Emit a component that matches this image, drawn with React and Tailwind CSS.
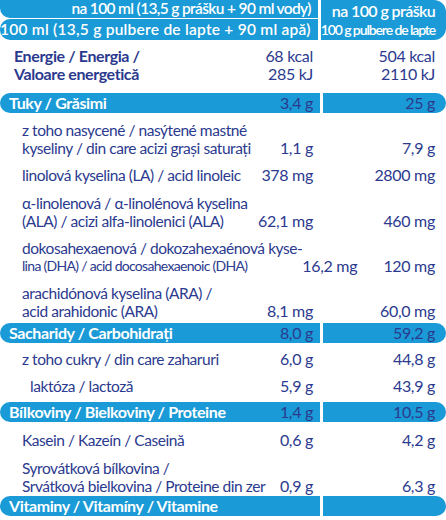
const font = { fontFamily: "Lato, 'Open Sans', sans-serif" };

function Bar({ title, v1, v2, cls = "" }) {
  return (
    <div className={`flex h-[20px] gap-[3px] ${cls}`}>
      <div className="flex w-[320px] items-center justify-between rounded-l-full bg-[#1a9ad6] pl-[9px] pr-[7px]">
        <span className="whitespace-nowrap text-[16px] font-bold tracking-[-0.4px] text-white">{title}</span>
        <span className="text-[16px] tracking-[-0.3px] text-[#2b3a8e]">{v1}</span>
      </div>
      <div className="flex flex-1 items-center justify-end rounded-r-full bg-[#1a9ad6] pr-[11px]">
        <span className="text-[16px] tracking-[-0.3px] text-[#2b3a8e]">{v2}</span>
      </div>
    </div>
  );
}

function Row({ lines, v1, v2, indent = "pl-[22px]", cls = "", small = false }) {
  return (
    <div className={`flex items-end gap-[3px] text-[#2b3a8e] ${cls}`}>
      <div className={`flex w-[320px] items-end justify-between pr-[7px] ${indent}`}>
        <div className="whitespace-nowrap leading-[18px]">
          {lines.map((l, i) => (
            <div
              key={i}
              className={
                small && i === lines.length - 1
                  ? "text-[14px] tracking-[-0.7px]"
                  : "text-[15.5px] tracking-[-0.45px]"
              }
            >
              {l}
            </div>
          ))}
        </div>
        <span className="whitespace-nowrap text-[16px] leading-[18px] tracking-[-0.3px]">{v1}</span>
      </div>
      <div className="flex flex-1 justify-end pr-[11px]">
        <span className="whitespace-nowrap text-[16px] leading-[18px] tracking-[-0.3px]">{v2}</span>
      </div>
    </div>
  );
}

export default function App() {
  return (
    <div className="h-[520px] w-[446px] overflow-hidden bg-white" style={font}>
      {/* header */}
      <div className="flex gap-[3px]">
        <div className="flex w-[320px] flex-col gap-[1px]">
          <div className="flex h-[18px] items-center justify-end rounded-bl-[10px] bg-[#1a9ad6] pr-[7px] text-[15.5px] font-semibold tracking-[-0.65px] text-white">
            <span className="whitespace-nowrap">na 100 ml (13,5 g prášku + 90 ml vody)</span>
          </div>
          <div className="flex h-[21px] items-center justify-end rounded-l-[10px] bg-[#1a9ad6] pr-[7px] text-[15.5px] font-semibold tracking-[0.25px] text-white">
            <span className="whitespace-nowrap">100 ml (13,5 g pulbere de lapte + 90 ml apă)</span>
          </div>
        </div>
        <div className="flex h-[40px] flex-1 flex-col items-end justify-center rounded-r-[12px] bg-[#1a9ad6] pr-[11px] text-white">
          <div className="whitespace-nowrap text-[16px] font-semibold leading-[18px] tracking-[-0.6px]">na 100 g prášku</div>
          <div className="whitespace-nowrap text-[14px] font-semibold leading-[19px] tracking-[-1.1px]">100 g pulbere de lapte</div>
        </div>
      </div>

      {/* energy */}
      <div className="mt-[7px] flex items-start gap-[3px] text-[#2b3a8e]">
        <div className="flex w-[320px] items-start justify-between pl-[14px] pr-[7px]">
          <div className="text-[16px] font-bold leading-[18px] tracking-[-0.4px]">
            <div>Energie / Energia /</div>
            <div>Valoare energetică</div>
          </div>
          <div className="text-right text-[16px] leading-[18px] tracking-[-0.3px]">
            <div>68 kcal</div>
            <div>285 kJ</div>
          </div>
        </div>
        <div className="flex-1 pr-[11px] text-right text-[16px] leading-[18px] tracking-[-0.3px]">
          <div>504 kcal</div>
          <div>2110 kJ</div>
        </div>
      </div>

      <Bar cls="mt-[10px]" title="Tuky / Grăsimi" v1="3,4 g" v2="25 g" />

      <Row cls="mt-[8px]" lines={["z toho nasycené / nasýtené mastné", "kyseliny / din care acizi grași saturați"]} v1="1,1 g" v2="7,9 g" />
      <Row cls="mt-[9px]" lines={["linolová kyselina (LA) / acid linoleic"]} v1="378 mg" v2="2800 mg" />
      <Row cls="mt-[10px]" lines={["α-linolenová / α-linolénová kyselina", "(ALA) / acizi alfa-linolenici (ALA)"]} v1="62,1 mg" v2="460 mg" />
      <Row cls="mt-[9px]" small lines={["dokosahexaenová / dokozahexaénová kyse-", "lina (DHA) / acid docosahexaenoic (DHA)"]} v1="16,2 mg" v2="120 mg" />
      <Row cls="mt-[9px]" lines={["arachidónová kyselina (ARA) /", "acid arahidonic (ARA)"]} v1="8,1 mg" v2="60,0 mg" />

      <Bar cls="mt-[3px]" title="Sacharidy / Carbohidrați" v1="8,0 g" v2="59,2 g" />
      <Row cls="mt-[7px]" lines={["z toho cukry / din care zaharuri"]} v1="6,0 g" v2="44,8 g" />
      <Row cls="mt-[9px]" indent="pl-[30px]" lines={["laktóza / lactoză"]} v1="5,9 g" v2="43,9 g" />

      <Bar cls="mt-[7px]" title="Bílkoviny / Bielkoviny / Proteine" v1="1,4 g" v2="10,5 g" />
      <Row cls="mt-[9px]" lines={["Kasein / Kazeín / Caseină"]} v1="0,6 g" v2="4,2 g" />
      <Row cls="mt-[10px]" lines={["Syrovátková bílkovina /", "Srvátková bielkovina / Proteine din zer"]} v1="0,9 g" v2="6,3 g" />

      <Bar cls="mt-[1px]" title="Vitaminy / Vitamíny / Vitamine" v1="" v2="" />
    </div>
  );
}
